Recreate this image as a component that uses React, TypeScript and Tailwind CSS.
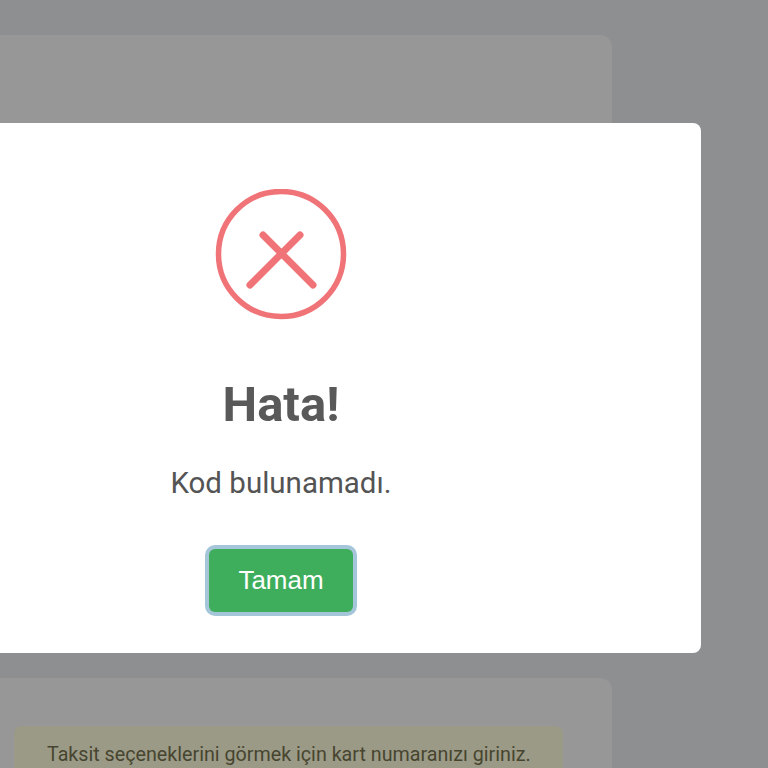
export default function App() {
  return (
    <div className="relative h-[768px] w-[768px] overflow-hidden bg-[#8e8f91] font-['Roboto',sans-serif]">
      {/* Page behind the overlay */}
      <div className="flex w-[612px] flex-col pt-[35px]">
        <div className="h-[300px] rounded-r-xl bg-[#979797]" />
        <div className="mt-[343px] h-[120px] rounded-r-xl bg-[#979797] pl-[14px] pt-[48px]">
          <div className="h-[72px] w-[549px] rounded-lg bg-[#9b9a87] px-[33px] pt-[17px] text-[19.7px] leading-[24px] whitespace-nowrap text-[#47452f]">
            Taksit seçeneklerini görmek için kart numaranızı giriniz.
          </div>
        </div>
      </div>

      {/* Error dialog */}
      <div className="absolute left-[-139px] top-[123px] flex h-[530px] w-[840px] flex-col items-center rounded-lg bg-white pt-[66px]">
        <svg width="132" height="132" viewBox="0 0 132 132" fill="none" stroke="#f07377">
          <circle cx="66" cy="65" r="62.5" strokeWidth="5.5" />
          <path d="M35 96 L85 46 M48 46 L98 96" strokeWidth="7" strokeLinecap="round" />
        </svg>
        <h2 className="mt-[54px] text-[49px] font-bold leading-[60px] text-[#595959]">Hata!</h2>
        <p className="mt-[28px] text-[29.5px] leading-[40px] text-[#545454]">Kod bulunamadı.</p>
        <button className="mt-[46px] h-[63px] w-[144px] rounded-md border-0 bg-[#3fae5c] font-['Liberation_Sans',sans-serif] text-[26px] text-white shadow-[0_0_0_4px_#a5c6d9]">
          Tamam
        </button>
      </div>
    </div>
  );
}
